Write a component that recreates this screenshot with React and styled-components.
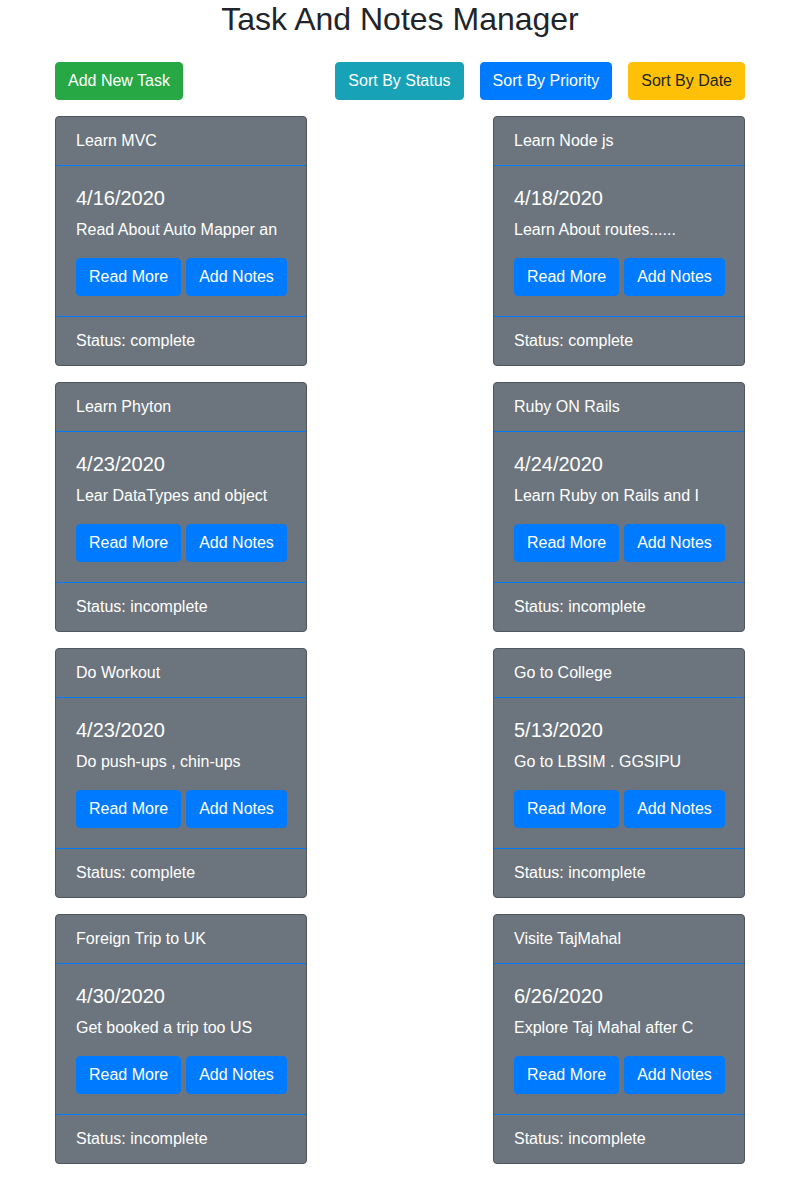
import React from 'react';
import styled, { createGlobalStyle } from 'styled-components';

const tasks = [
  { title: 'Learn MVC', date: '4/16/2020', text: 'Read About Auto Mapper an', status: 'complete' },
  { title: 'Learn Node js', date: '4/18/2020', text: 'Learn About routes......', status: 'complete' },
  { title: 'Learn Phyton', date: '4/23/2020', text: 'Lear DataTypes and object', status: 'incomplete' },
  { title: 'Ruby ON Rails', date: '4/24/2020', text: 'Learn Ruby on Rails and I', status: 'incomplete' },
  { title: 'Do Workout', date: '4/23/2020', text: 'Do push-ups , chin-ups', status: 'complete' },
  { title: 'Go to College', date: '5/13/2020', text: 'Go to LBSIM . GGSIPU', status: 'incomplete' },
  { title: 'Foreign Trip to UK', date: '4/30/2020', text: 'Get booked a trip too US', status: 'incomplete' },
  { title: 'Visite TajMahal', date: '6/26/2020', text: 'Explore Taj Mahal after C', status: 'incomplete' },
];

const GlobalStyle = createGlobalStyle`
  * {
    box-sizing: border-box;
  }
  body {
    margin: 0;
    background: #fff;
    color: #212529;
    font-family: "Liberation Sans", Arial, sans-serif;
    font-size: 16px;
    line-height: 1.5;
  }
`;

const colors = {
  success: { bg: '#28a745', fg: '#fff' },
  info: { bg: '#17a2b8', fg: '#fff' },
  primary: { bg: '#007bff', fg: '#fff' },
  warning: { bg: '#ffc107', fg: '#212529' },
};

const StPage = styled.div`
  width: 690px;
  margin: 0 auto;
  padding-bottom: 16px;
`;

const StTitle = styled.h2`
  margin: 0 0 24px;
  font-size: 32px;
  font-weight: 500;
  line-height: 38px;
  text-align: center;
`;

const StToolbar = styled.div`
  display: flex;
  justify-content: space-between;
  align-items: center;
  margin-bottom: 16px;
`;

const StSortGroup = styled.div`
  display: flex;
  gap: 16px;
`;

const StButton = styled.button`
  display: inline-block;
  flex-shrink: 0;
  padding: 6px 12px;
  border: 1px solid ${(p) => colors[p.$variant].bg};
  border-radius: 4px;
  background: ${(p) => colors[p.$variant].bg};
  color: ${(p) => colors[p.$variant].fg};
  font-family: inherit;
  font-size: 16px;
  line-height: 24px;
  white-space: nowrap;
  cursor: pointer;
`;

const StGrid = styled.div`
  display: grid;
  grid-template-columns: 252px 252px;
  justify-content: space-between;
  row-gap: 16px;
`;

const StCard = styled.div`
  display: flex;
  flex-direction: column;
  border: 1px solid #4f565c;
  border-radius: 4px;
  background: #6c757d;
  color: #fff;
  overflow: hidden;
`;

const StCardHeader = styled.div`
  padding: 12px 20px;
  border-bottom: 1px solid #007bff;
  line-height: 24px;
`;

const StCardBody = styled.div`
  padding: 20px;
`;

const StDate = styled.h5`
  margin: 0 0 8px;
  font-size: 20px;
  font-weight: 500;
  line-height: 24px;
`;

const StText = styled.p`
  margin: 0 0 16px;
  line-height: 24px;
  white-space: nowrap;
`;

const StActions = styled.div`
  display: flex;
  gap: 5px;
`;

const StCardFooter = styled.div`
  padding: 12px 20px;
  border-top: 1px solid #007bff;
  line-height: 24px;
`;

const TaskCard = ({ task }) => (
  <StCard>
    <StCardHeader>{task.title}</StCardHeader>
    <StCardBody>
      <StDate>{task.date}</StDate>
      <StText>{task.text}</StText>
      <StActions>
        <StButton $variant="primary">Read More</StButton>
        <StButton $variant="primary">Add Notes</StButton>
      </StActions>
    </StCardBody>
    <StCardFooter>Status: {task.status}</StCardFooter>
  </StCard>
);

const App = () => {
  return (
    <>
      <GlobalStyle />
      <StPage>
        <StTitle>Task And Notes Manager</StTitle>
        <StToolbar>
          <StButton $variant="success">Add New Task</StButton>
          <StSortGroup>
            <StButton $variant="info">Sort By Status</StButton>
            <StButton $variant="primary">Sort By Priority</StButton>
            <StButton $variant="warning">Sort By Date</StButton>
          </StSortGroup>
        </StToolbar>
        <StGrid>
          {tasks.map((task) => (
            <TaskCard key={task.title} task={task} />
          ))}
        </StGrid>
      </StPage>
    </>
  );
};

export default App;
